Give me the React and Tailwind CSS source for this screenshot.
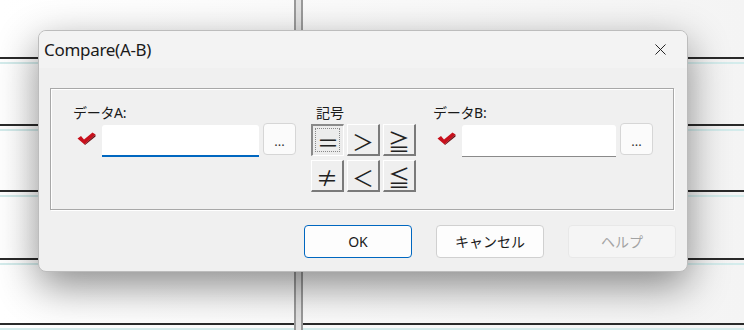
import { X } from "lucide-react";

const font = { fontFamily: '"Noto Sans", "Noto Sans CJK JP", sans-serif' };

function BgRow({ h }) {
    return (
        <div className={`flex flex-col justify-end ${h}`}>
            <div className="h-[2px] bg-[#2a2a2a]" />
            <div className="h-[3px]" />
            <div className="h-[2px] bg-[#d4ecec]" />
        </div>
    );
}

function BgColumn({ className }) {
    return (
        <div className={`flex flex-col ${className}`}>
            <div className="h-[57px] shrink-0" />
            <BgRow h="h-[7px]" />
            <BgRow h="h-[68px]" />
            <BgRow h="h-[67px]" />
            <BgRow h="h-[68px]" />
            <BgRow h="h-[66px]" />
        </div>
    );
}

function CheckMark() {
    return (
        <svg width="19" height="13" viewBox="0 0 19 13" className="shrink-0">
            <path d="M0.5 6.5 L4 4 L7 7.5 L15.5 0.5 L18.5 2.5 L7.5 12.5 Z" fill="#c8101c" />
            <path d="M7.5 12.5 L18.5 2.5 L18.5 4.5 L8 13 Z" fill="#6b0b10" />
        </svg>
    );
}

function DotsButton() {
    return (
        <button className="w-[33px] h-[32px] shrink-0 rounded-[4px] border border-[#d6d6d6] bg-[#fbfbfb] text-[13px] text-[#333] leading-none pt-[4px]">
            ...
        </button>
    );
}

function SymbolButton({ children, pressed }) {
    return (
        <button
            className={
                pressed
                    ? "w-[33px] h-[32px] flex items-center justify-center border-t-2 border-l-2 border-r border-b border-t-[#8a8a8a] border-l-[#8a8a8a] border-r-white border-b-white bg-[#ececec] outline-dotted outline-1 outline-[#888] -outline-offset-[5px] text-[22px] leading-none text-[#222]"
                    : "w-[33px] h-[32px] flex items-center justify-center border-t border-l border-r-2 border-b-2 border-t-white border-l-white border-r-[#7a7a7a] border-b-[#7a7a7a] bg-[#efefef] text-[22px] leading-none text-[#222]"
            }
            style={{ fontFamily: '"Noto Sans CJK JP", sans-serif' }}
        >
            {children}
        </button>
    );
}

function DataField({ label, active, inputW }) {
    return (
        <div className="flex flex-col">
            <div className="text-[14px] leading-none text-[#1a1a1a] h-[15px] tracking-[-0.3px]">{label}</div>
            <div className="flex items-start mt-[4px]">
                <div className="pl-[4px] pr-[6px] pt-[7px]">
                    <CheckMark />
                </div>
                <div
                    className={`h-[32px] ${inputW} bg-white rounded-t-[3px] ${
                        active ? "border-b-2 border-b-[#0067c0]" : "border-b border-b-[#8a8a8a]"
                    }`}
                />
                <div className="ml-[4px] -mt-[2px]">
                    <DotsButton />
                </div>
            </div>
        </div>
    );
}

function DialogButton({ children, variant }) {
    const cls =
        variant === "primary"
            ? "border-[#0067c0] bg-[#fdfdfd] text-[#1a1a1a]"
            : variant === "disabled"
            ? "border-[#e8e8e8] bg-[#f5f5f5] text-[#a3a3a3]"
            : "border-[#d0d0d0] bg-[#fdfdfd] text-[#1a1a1a]";
    return (
        <button className={`w-[108px] h-[33px] rounded-[4px] border text-[14px] ${cls}`}>{children}</button>
    );
}

export default function App() {
    return (
        <div className="relative w-[744px] h-[330px] overflow-hidden bg-white" style={font}>
            {/* background sheet */}
            <div className="flex h-full bg-gradient-to-r from-white to-[#f4f4f4]">
                <BgColumn className="w-[294px]" />
                <div className="w-[2px] bg-[#9a9a9a]" />
                <div className="w-[5px] bg-[#e2e2e2]" />
                <div className="w-[2px] bg-[#9a9a9a]" />
                <BgColumn className="flex-1" />
            </div>

            {/* dialog */}
            <div className="absolute left-[38px] top-[30px] w-[650px] h-[242px] rounded-[8px] border border-[#bcbcbc] bg-[#f0f0f0] shadow-[0_14px_40px_rgba(0,0,0,0.45)] overflow-hidden flex flex-col">
                <div className="h-[37px] bg-[#f3f3f3] flex items-center justify-between pl-[5px] pr-[17px] shrink-0">
                    <span className="text-[17px] text-[#1a1a1a] tracking-[-0.3px]">Compare(A-B)</span>
                    <X size={19} strokeWidth={1.2} className="text-[#1a1a1a]" />
                </div>
                <div className="flex flex-col pl-[11px] pr-[13px] pt-[20px]">
                    <div className="h-[122px] border border-[#a8a8a8] shadow-[inset_1px_1px_0_#fff,1px_1px_0_#fff] flex pl-[22px] pt-[17px]">
                        <DataField label="データA:" active inputW="w-[157px]" />
                        <div className="flex flex-col ml-[15px]">
                            <div className="text-[14px] leading-none text-[#1a1a1a] h-[15px] pl-[5px]">記号</div>
                            <div className="grid grid-cols-3 gap-x-[3px] gap-y-[4px] mt-[3px]">
                                <SymbolButton pressed>＝</SymbolButton>
                                <SymbolButton>＞</SymbolButton>
                                <SymbolButton>≧</SymbolButton>
                                <SymbolButton>≠</SymbolButton>
                                <SymbolButton>＜</SymbolButton>
                                <SymbolButton>≦</SymbolButton>
                            </div>
                        </div>
                        <div className="ml-[17px]">
                            <DataField label="データB:" inputW="w-[154px]" />
                        </div>
                    </div>
                    <div className="flex justify-end gap-[24px] mt-[15px] pr-[-2px] mr-[-2px]">
                        <DialogButton variant="primary">OK</DialogButton>
                        <DialogButton>キャンセル</DialogButton>
                        <DialogButton variant="disabled">ヘルプ</DialogButton>
                    </div>
                </div>
            </div>
        </div>
    );
}
